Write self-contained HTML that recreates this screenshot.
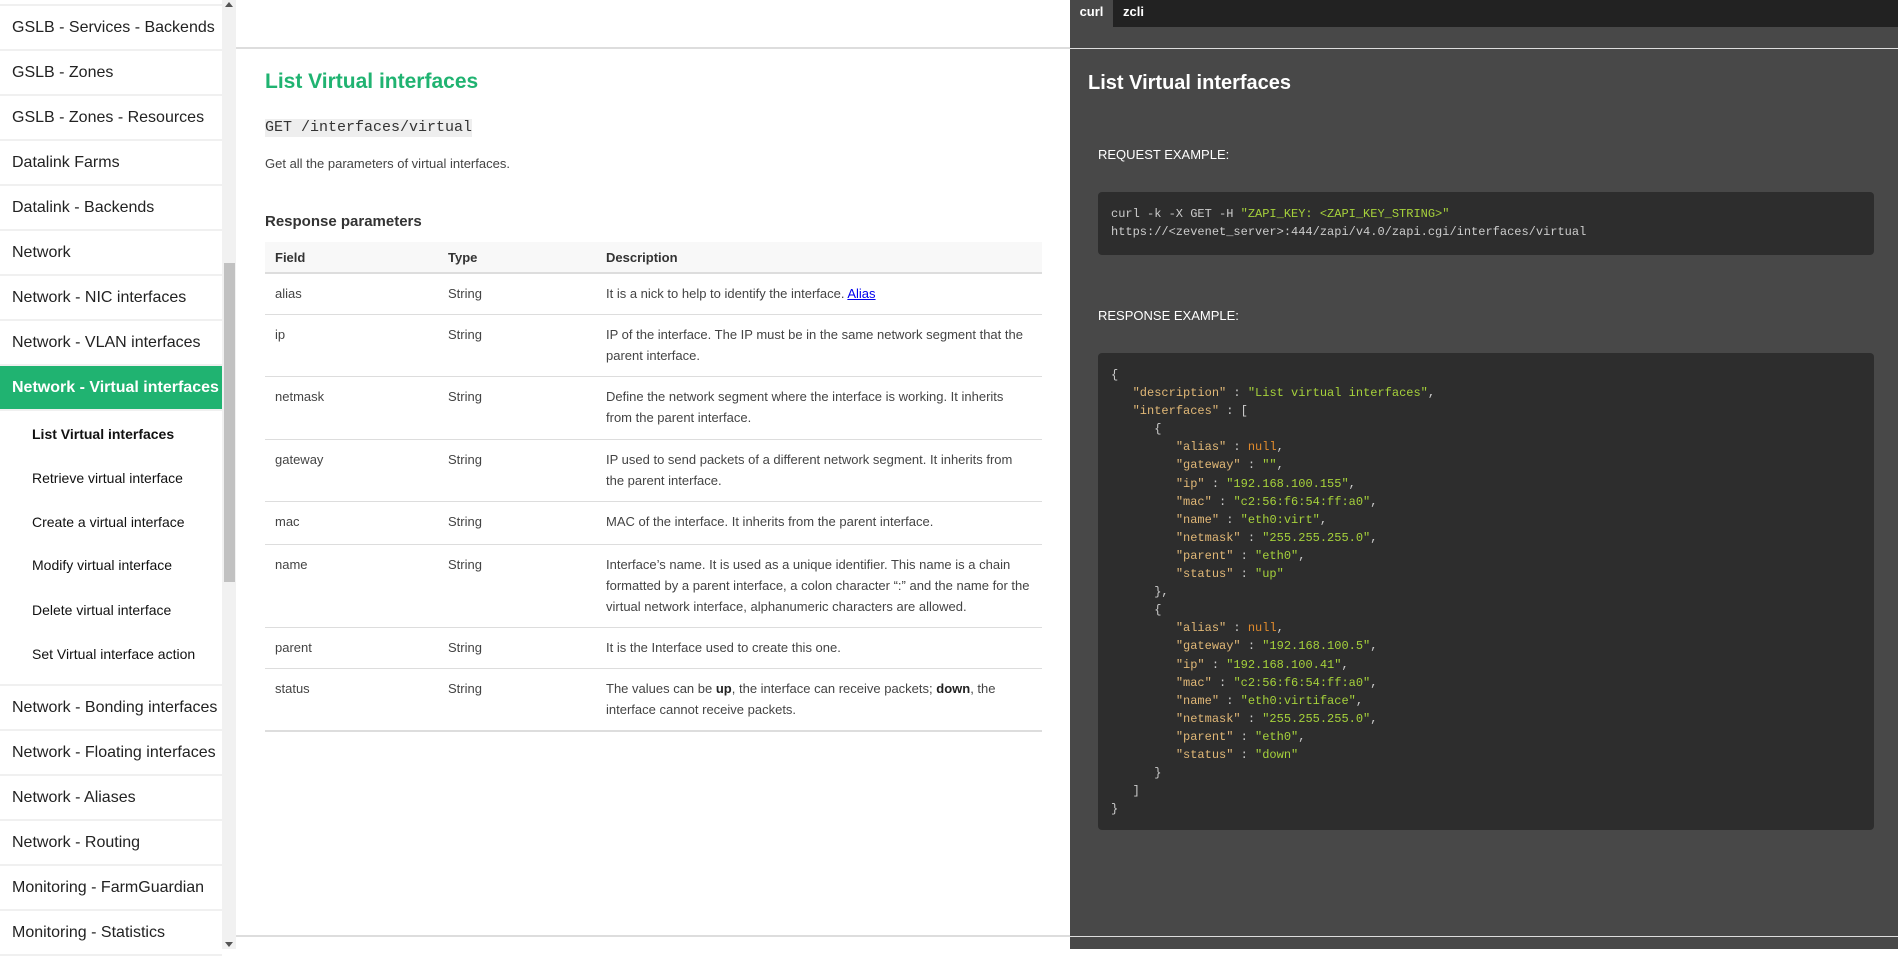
<!DOCTYPE html>
<html><head><meta charset="utf-8"><style>
*{margin:0;padding:0;box-sizing:border-box}
body{width:1898px;height:949px;overflow:hidden;position:relative;background:#fff;font-family:"Liberation Sans",sans-serif}
.abs{position:absolute}
.side{left:0;top:0;width:222px;height:949px;background:#fff}
.it{position:absolute;left:0;width:222px;height:45px;border-bottom:2px solid #f0f0f0;font-size:16px;color:#222;padding-left:12px;line-height:44px}
.sub{position:absolute;left:32px;font-size:14px;color:#111;line-height:20px}
.sb{left:222px;top:0;width:14px;height:949px;background:#f1f1f1}
.th{left:224px;top:263px;width:11px;height:319px;background:#c1c1c1}
.main{left:236px;top:0;width:834px;height:949px}
.mono{font-family:"Liberation Mono",monospace}
table{border-collapse:collapse}
.tbl{position:absolute;left:265px;top:242px;width:777px;font-size:13px;color:#444}
.row{position:absolute;left:0;width:777px;border-bottom:1px solid #ddd}
.c{position:absolute;line-height:21px}
.right{left:1070px;top:0;width:828px;height:949px;background:#484848}
.code{background:#2d2d2d;border-radius:4px;position:absolute;left:1098px;width:776px;font-family:"Liberation Mono",monospace;font-size:12px;color:#ccc;white-space:pre}
.k{color:#e1b877}.s{color:#a6d13b}.n{color:#e08a2c}
</style></head><body>
<div class="abs side">
<div class="it" style="top:-39px"></div>
<div class="it" style="top:6px">GSLB - Services - Backends</div>
<div class="it" style="top:51px">GSLB - Zones</div>
<div class="it" style="top:96px">GSLB - Zones - Resources</div>
<div class="it" style="top:141px">Datalink Farms</div>
<div class="it" style="top:186px">Datalink - Backends</div>
<div class="it" style="top:231px">Network</div>
<div class="it" style="top:276px">Network - NIC interfaces</div>
<div class="it" style="top:321px">Network - VLAN interfaces</div>
<div class="it" style="top:366px;background:#20b371;color:#fff;font-weight:bold;height:45px">Network - Virtual interfaces</div>
<div class="sub" style="top:424px;font-weight:bold">List Virtual interfaces</div>
<div class="sub" style="top:468px">Retrieve virtual interface</div>
<div class="sub" style="top:512px">Create a virtual interface</div>
<div class="sub" style="top:555px">Modify virtual interface</div>
<div class="sub" style="top:600px">Delete virtual interface</div>
<div class="sub" style="top:644px">Set Virtual interface action</div>
<div class="it" style="top:641px;height:45px;padding:0"></div>
<div class="it" style="top:686px">Network - Bonding interfaces</div>
<div class="it" style="top:731px">Network - Floating interfaces</div>
<div class="it" style="top:776px">Network - Aliases</div>
<div class="it" style="top:821px">Network - Routing</div>
<div class="it" style="top:866px">Monitoring - FarmGuardian</div>
<div class="it" style="top:911px">Monitoring - Statistics</div>
</div>
<div class="abs sb"></div>
<div class="abs th"></div>
<div class="abs" style="left:225px;top:2px;width:0;height:0;border-left:4px solid transparent;border-right:4px solid transparent;border-bottom:5px solid #555"></div>
<div class="abs" style="left:225px;top:942px;width:0;height:0;border-left:4px solid transparent;border-right:4px solid transparent;border-top:5px solid #555"></div>

<div class="abs" style="left:236px;top:47px;width:834px;height:2px;background:#ddd"></div>
<div class="abs" style="left:236px;top:935px;width:834px;height:2px;background:#ddd"></div>
<div class="abs" style="left:265px;top:70px;font-size:21px;font-weight:bold;color:#20b371">List Virtual interfaces</div>
<div class="abs mono" style="left:265px;top:119px;font-size:15px;color:#333;background:#eee;line-height:18px">GET /interfaces/virtual</div>
<div class="abs" style="left:265px;top:156px;font-size:13px;color:#444">Get all the parameters of virtual interfaces.</div>
<div class="abs" style="left:265px;top:213px;font-size:15px;font-weight:bold;color:#333">Response parameters</div>
<div class="tbl" style="height:490px">
<div class="row" style="top:0;height:32px;background:#f8f8f8;border-bottom:2px solid #ddd;font-weight:bold;color:#333"><div class="c" style="left:10px;top:5px">Field</div><div class="c" style="left:183px;top:5px">Type</div><div class="c" style="left:341px;top:5px">Description</div></div>
<div class="row" style="top:32px;height:41px"><div class="c" style="left:10px;top:9px">alias</div><div class="c" style="left:183px;top:9px">String</div><div class="c" style="left:341px;top:9px">It is a nick to help to identify the interface. <a style="color:#00e;text-decoration:underline">Alias</a></div></div>
<div class="row" style="top:73px;height:62px"><div class="c" style="left:10px;top:9px">ip</div><div class="c" style="left:183px;top:9px">String</div><div class="c" style="left:341px;top:9px;width:425px">IP of the interface. The IP must be in the same network segment that the parent interface.</div></div>
<div class="row" style="top:135px;height:63px"><div class="c" style="left:10px;top:9px">netmask</div><div class="c" style="left:183px;top:9px">String</div><div class="c" style="left:341px;top:9px;width:425px">Define the network segment where the interface is working. It inherits from the parent interface.</div></div>
<div class="row" style="top:198px;height:62px"><div class="c" style="left:10px;top:9px">gateway</div><div class="c" style="left:183px;top:9px">String</div><div class="c" style="left:341px;top:9px;width:425px">IP used to send packets of a different network segment. It inherits from the parent interface.</div></div>
<div class="row" style="top:260px;height:43px"><div class="c" style="left:10px;top:9px">mac</div><div class="c" style="left:183px;top:9px">String</div><div class="c" style="left:341px;top:9px">MAC of the interface. It inherits from the parent interface.</div></div>
<div class="row" style="top:303px;height:83px"><div class="c" style="left:10px;top:9px">name</div><div class="c" style="left:183px;top:9px">String</div><div class="c" style="left:341px;top:9px;width:425px">Interface’s name. It is used as a unique identifier. This name is a chain formatted by a parent interface, a colon character “:” and the name for the virtual network interface, alphanumeric characters are allowed.</div></div>
<div class="row" style="top:386px;height:41px"><div class="c" style="left:10px;top:9px">parent</div><div class="c" style="left:183px;top:9px">String</div><div class="c" style="left:341px;top:9px">It is the Interface used to create this one.</div></div>
<div class="row" style="top:427px;height:63px;border-bottom:2px solid #ddd"><div class="c" style="left:10px;top:9px">status</div><div class="c" style="left:183px;top:9px">String</div><div class="c" style="left:341px;top:9px;width:425px">The values can be <b style="color:#222">up</b>, the interface can receive packets; <b style="color:#222">down</b>, the interface cannot receive packets.</div></div>
</div>

<div class="abs right"></div>
<div class="abs" style="left:1070px;top:0;width:828px;height:27px;background:#222"></div>
<div class="abs" style="left:1070px;top:0;width:43px;height:27px;background:#484848;color:#fff;font-size:13px;font-weight:bold;line-height:24px;text-align:center">curl</div>
<div class="abs" style="left:1123px;top:0;color:#fff;font-size:13px;font-weight:bold;line-height:24px">zcli</div>
<div class="abs" style="left:1070px;top:48px;width:828px;height:1px;background:#ddd"></div>
<div class="abs" style="left:1070px;top:936px;width:828px;height:1px;background:#ddd"></div>
<div class="abs" style="left:1088px;top:72px;color:#fff;font-size:20px;font-weight:bold">List Virtual interfaces</div>
<div class="abs" style="left:1098px;top:147px;color:#fff;font-size:13px">REQUEST EXAMPLE:</div>
<div class="code" style="top:192px;height:63px;padding:13px 0 0 13px;line-height:18px">curl -k -X GET -H <span class="s">"ZAPI_KEY: &lt;ZAPI_KEY_STRING&gt;"</span>
https://&lt;zevenet_server&gt;:444/zapi/v4.0/zapi.cgi/interfaces/virtual</div>
<div class="abs" style="left:1098px;top:308px;color:#fff;font-size:13px">RESPONSE EXAMPLE:</div>
<div class="code" style="top:353px;height:477px;padding:13px 0 0 13px;line-height:18.1px">{
   <span class="k">"description"</span> : <span class="s">"List virtual interfaces"</span>,
   <span class="k">"interfaces"</span> : [
      {
         <span class="k">"alias"</span> : <span class="n">null</span>,
         <span class="k">"gateway"</span> : <span class="s">""</span>,
         <span class="k">"ip"</span> : <span class="s">"192.168.100.155"</span>,
         <span class="k">"mac"</span> : <span class="s">"c2:56:f6:54:ff:a0"</span>,
         <span class="k">"name"</span> : <span class="s">"eth0:virt"</span>,
         <span class="k">"netmask"</span> : <span class="s">"255.255.255.0"</span>,
         <span class="k">"parent"</span> : <span class="s">"eth0"</span>,
         <span class="k">"status"</span> : <span class="s">"up"</span>
      },
      {
         <span class="k">"alias"</span> : <span class="n">null</span>,
         <span class="k">"gateway"</span> : <span class="s">"192.168.100.5"</span>,
         <span class="k">"ip"</span> : <span class="s">"192.168.100.41"</span>,
         <span class="k">"mac"</span> : <span class="s">"c2:56:f6:54:ff:a0"</span>,
         <span class="k">"name"</span> : <span class="s">"eth0:virtiface"</span>,
         <span class="k">"netmask"</span> : <span class="s">"255.255.255.0"</span>,
         <span class="k">"parent"</span> : <span class="s">"eth0"</span>,
         <span class="k">"status"</span> : <span class="s">"down"</span>
      }
   ]
}</div>
</body></html>
